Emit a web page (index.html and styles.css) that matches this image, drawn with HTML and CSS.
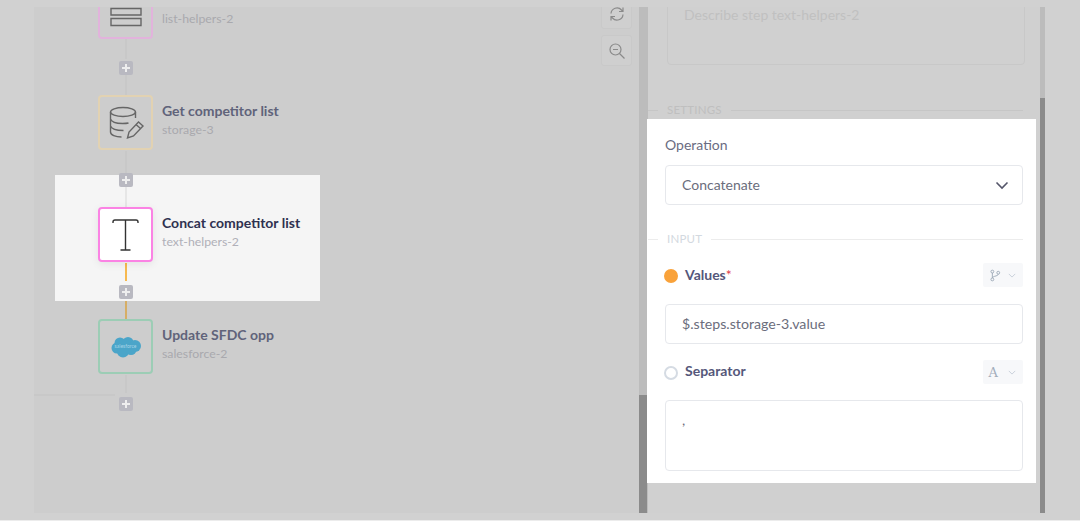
FILE: index.html
```html
<!DOCTYPE html>
<html lang="en">
<head>
<meta charset="utf-8">
<title>Workflow step</title>
<link rel="stylesheet" href="styles.css">
</head>
<body>
<div class="frame">
  <main class="canvas">
    <div class="branch"></div>
    <div class="line line-a"></div>
    <div class="line line-b"></div>
    <div class="line line-c"></div>
    <div class="line line-d"></div>
    <div class="line line-e"></div>
    <div class="spot"></div>
    <div class="line line-g"></div>
    <div class="line line-h"></div>

    <span class="plus plus-1"><svg viewBox="0 0 14 14"><path d="M7 3v8M3 7h8"/></svg></span>
    <span class="plus plus-2"><svg viewBox="0 0 14 14"><path d="M7 3v8M3 7h8"/></svg></span>
    <span class="plus plus-3"><svg viewBox="0 0 14 14"><path d="M7 3v8M3 7h8"/></svg></span>
    <span class="plus plus-4"><svg viewBox="0 0 14 14"><path d="M7 3v8M3 7h8"/></svg></span>

    <article class="node node-1">
      <div class="tile tile-pink-dim">
        <svg class="ico" viewBox="0 0 55 55"><path d="M13 24.500h30v6.500h-30zM13 34.500h30v7h-30z"/></svg>
      </div>
      <div class="meta"><p class="name"></p><p class="slug">list-helpers-2</p></div>
    </article>
    <article class="node node-2">
      <div class="tile tile-amber-dim">
        <svg class="ico" viewBox="0 0 55 55">
          <ellipse cx="25" cy="17" rx="12.500" ry="4.500"/>
          <path d="M12.500 17v20c0 3 5 5 11 5M37.500 17v6M12.500 24c1 3 6 4.500 12 4.500 2 0 4 0 6-.5M12.500 31c1 3 6 4.500 13 4.500"/>
          <path d="M29.500 43l1.500-6 9.500-10 4.500 4-9.500 10zM38 29.500l4.500 4"/>
        </svg>
      </div>
      <div class="meta"><p class="name">Get competitor list</p><p class="slug">storage-3</p></div>
    </article>
    <article class="node node-3">
      <div class="tile tile-pink">
        <svg class="ico ico-t" viewBox="0 0 55 55"><path d="M27.500 13v30M15 16v-1c0-1.200.8-2 2-2h21c1.200 0 2 .8 2 2v1M22.500 43h10"/></svg>
      </div>
      <div class="meta"><p class="name name-hot">Concat competitor list</p><p class="slug">text-helpers-2</p></div>
    </article>
    <article class="node node-4">
      <div class="tile tile-green-dim">
        <svg class="cloud" viewBox="0 0 30 22">
          <circle cx="9" cy="7" r="5.500"/><circle cx="17" cy="6.500" r="5.500"/><circle cx="24" cy="10" r="6"/>
          <circle cx="6" cy="12" r="5.500"/><circle cx="12" cy="15.500" r="6"/><circle cx="20" cy="13.500" r="5.500"/>
        </svg>
        <span class="cloud-word">salesforce</span>
      </div>
      <div class="meta"><p class="name">Update SFDC opp</p><p class="slug">salesforce-2</p></div>
    </article>
  </main>

  <aside class="tools">
    <button class="tool tool-top" type="button">
      <svg viewBox="0 0 18 18"><path d="M3 8.500a6 6 0 0 1 10.500-3.500L15 6.500M15 2.500v4h-4M15 9.500A6 6 0 0 1 4.500 13L3 11.500M3 15.500v-4h4"/></svg>
    </button>
    <button class="tool" type="button">
      <svg viewBox="0 0 18 18"><circle cx="7.500" cy="7.500" r="5.500"/><path d="M5 7.500h5M11.500 11.500l5 5"/></svg>
    </button>
  </aside>

  <div class="divider"><div class="divider-thumb"></div></div>

  <section class="panel">
    <div class="describe">Describe step text-helpers-2</div>
    <div class="rule rule-dim"><span>SETTINGS</span></div>
    <div class="form">
      <label class="label">Operation</label>
      <div class="field select"><span class="select-text">Concatenate</span>
        <svg class="chev" viewBox="0 0 14 9"><path d="M1.500 1.500L7 7l5.500-5.500"/></svg>
      </div>
      <div class="rule"><span>INPUT</span></div>
      <div class="param param-values">
        <span class="dot dot-on"></span>
        <span class="param-name">Values<em>*</em></span>
        <span class="mode">
          <svg class="mode-ico" viewBox="0 0 14 16"><circle cx="3" cy="3" r="1.800"/><circle cx="3" cy="13" r="1.800"/><circle cx="10.500" cy="4.500" r="1.800"/><path d="M3 4.800v6.400M10.500 6.300c0 2.500-5 2-7 4"/></svg>
          <svg class="mode-chev" viewBox="0 0 10 6"><path d="M1 1l4 4 4-4"/></svg>
        </span>
      </div>
      <div class="field value">$.steps.storage-3.value</div>
      <div class="param param-sep">
        <span class="dot"></span>
        <span class="param-name">Separator</span>
        <span class="mode mode-text">
          <span class="mode-a">A</span>
          <svg class="mode-chev" viewBox="0 0 10 6"><path d="M1 1l4 4 4-4"/></svg>
        </span>
      </div>
      <div class="field area">,</div>
    </div>
  </section>

  <div class="scrollbar"><div class="scrollbar-thumb"></div></div>
</div>
</body>
</html>
```
FILE: styles.css
```css
* { box-sizing: border-box; }
html, body { margin: 0; height: 521px; overflow: hidden; }
body {
  background: #d1d1d1;
  box-shadow: inset 0 -1px #ececec;
  font-family: Lato, "Noto Sans", sans-serif;
  padding: 7px 35px 0 34px;
}
p { margin: 0; }
.frame {
  position: relative;
  display: flex;
  width: 1011px;
  height: 506px;
  background: #cdcdcd;
  overflow: hidden;
}
.canvas { position: relative; flex: 0 0 605px; height: 100%; }
.tools { flex: 0 0 0; position: relative; }
.tool {
  position: absolute;
  left: -38px;
  width: 31px;
  height: 31px;
  padding: 0;
  display: flex;
  align-items: center;
  justify-content: center;
  background: #cfcfcf;
  border: 1px solid #c9c9c9;
  border-radius: 3px;
  top: 28px;
}
.tool-top { top: -9px; }
.tool svg { width: 18px; height: 18px; fill: none; stroke: #8a8a8a; stroke-width: 1.200; }
.divider { flex: 0 0 9px; background: #bcbcbc; position: relative; }
.divider-thumb { position: absolute; left: 0; right: 1px; top: 388px; bottom: 0; background: #8b8b8b; }

.line { position: absolute; left: 91px; width: 2px; background: #c8c8c8; }
.line-a { top: 32px; height: 20px; }
.line-b { top: 68px; height: 20px; }
.line-c { top: 144px; height: 22px; }
.line-d { top: 180px; height: 20px; background: #e6e6e6; z-index: 2; }
.line-e { top: 368px; height: 18px; }
.line-g { top: 256px; height: 18px; background: #f7b94f; z-index: 2; }
.line-h { top: 292px; height: 20px; background: #d6ae66; }
.branch { position: absolute; left: 0; top: 387px; width: 81px; height: 2px; background: #c8c8c8; }
.spot { position: absolute; left: 21px; top: 168px; width: 265px; height: 126px; background: #f5f5f5; z-index: 1; }

.plus {
  position: absolute;
  left: 85px;
  width: 14px;
  height: 14px;
  background: #b9b9c1;
  border-radius: 2px;
  z-index: 3;
  display: block;
}
.plus svg { display: block; width: 14px; height: 14px; fill: none; stroke: #eeeeee; stroke-width: 2; }
.plus-1 { top: 54px; }
.plus-2 { top: 166px; }
.plus-3 { top: 278px; }
.plus-4 { top: 390px; }

.node { position: absolute; left: 64px; display: flex; gap: 9px; z-index: 2; }
.node-1 { top: -23px; }
.node-2 { top: 88px; }
.node-3 { top: 200px; }
.node-4 { top: 312px; }
.tile {
  position: relative;
  flex: none;
  width: 55px;
  height: 55px;
  border: 2px solid;
  border-radius: 4px;
  display: flex;
  align-items: center;
  justify-content: center;
}
.tile-pink-dim { border-color: #e2b3dc; }
.tile-amber-dim { border-color: #e2d2b2; }
.tile-green-dim { border-color: #9ccdb5; }
.tile-pink { border-color: #fb83e4; background: #fff; box-shadow: 0 2px 8px rgba(0,0,0,.08); }
.ico { width: 55px; height: 55px; fill: none; stroke: #666; stroke-width: 1.400; flex: none; }
.ico-t { stroke: #333; }
.cloud { width: 30px; height: 22px; fill: #4ba5c9; flex: none; }
.cloud-word {
  position: absolute;
  left: 0;
  right: 0;
  top: 22px;
  text-align: center;
  font-size: 5px;
  line-height: 6px;
  color: #a9d4e6;
}
.meta { padding-top: 7px; }
.name { font-size: 14px; line-height: 18px; font-weight: 700; color: #60637a; white-space: nowrap; height: 18px; }
.name-hot { color: #2f3150; }
.slug { font-size: 12.300px; line-height: 18px; margin-top: 1px; color: #a9a9ae; white-space: nowrap; }
.node-3 .slug { color: #b0b0b8; }

.panel { flex: 0 0 392px; position: relative; background: #d0d0d0; }
.describe {
  margin: -15px 15px 0 19px;
  height: 73px;
  border: 1px solid #c8c8c8;
  border-radius: 4px;
  padding: 15px 16px 0;
  font-size: 14px;
  color: #c0c0c0;
  line-height: 14px;
}
.rule {
  display: flex;
  align-items: center;
  font-size: 11.500px;
  line-height: 14px;
  letter-spacing: .2px;
  color: #d3d9e0;
}
.rule::before { content: ""; width: 10px; height: 1px; background: #ececec; margin-right: 9px; }
.rule::after { content: ""; flex: 1; height: 1px; background: #ececec; margin-left: 9px; }
.rule-dim { color: #bfbfbf; margin: 38px 17px 0 0; }
.rule-dim::before, .rule-dim::after { background: #c6c6c6; }

.form {
  position: absolute;
  left: -1px;
  top: 112px;
  width: 389px;
  height: 364px;
  background: #fff;
  padding: 17px 13px 0 18px;
  z-index: 4;
}
.label { display: block; font-size: 14px; line-height: 18px; color: #6a6c82; }
.field {
  border: 1px solid #e6e8ec;
  border-radius: 4px;
  padding: 0 16px;
  font-size: 14.200px;
  color: #6b6d7c;
}
.select {
  display: flex;
  align-items: center;
  justify-content: space-between;
  height: 40px;
  margin-top: 11px;
  padding-right: 13px;
}
.select-text { font-size: 14px; margin-bottom: 2px; }
.chev { width: 14px; height: 9px; fill: none; stroke: #55566a; stroke-width: 1.600; }
.form .rule { margin: 27px 0 0 -17px; }
.param { display: flex; align-items: center; height: 24px; }
.param-values { margin-top: 17px; }
.param-sep { margin-top: 16px; }
.param-sep .param-name { padding-bottom: 4px; }
.dot {
  flex: none;
  width: 14px;
  height: 14px;
  border-radius: 50%;
  border: 2px solid #d5dbe3;
  margin: 2px 7px 0 -1px;
}
.dot-on { background: #f9a23a; border-color: #f9a23a; }
.param-name { font-size: 14px; font-weight: 700; color: #55577a; padding-bottom: 2px; }
.param-name em { color: #e0404a; font-style: normal; font-weight: 400; font-size: 14px; }
.mode {
  margin-left: auto;
  display: flex;
  align-items: center;
  gap: 7px;
  height: 24px;
  padding: 0 7px;
  background: #f7f8fa;
  border-radius: 2px;
}
.mode-text { gap: 10px; padding-left: 6px; }
.mode-ico { width: 11px; height: 15px; fill: none; stroke: #97a3b3; stroke-width: 1.100; }
.mode-chev { width: 8px; height: 5px; fill: none; stroke: #c9d0d9; stroke-width: 1.200; }
.mode-a { font-family: "DejaVu Serif", serif; font-size: 13px; color: #a2adbb; line-height: 1; }
.value { height: 40px; line-height: 38px; margin-top: 17px; }
.area { height: 71px; margin-top: 16px; padding-top: 10px; line-height: 18px; }

.scrollbar { flex: 0 0 5px; background: #bcbcbc; position: relative; }
.scrollbar-thumb { position: absolute; left: 0; right: 0; top: 91px; bottom: 0; background: #8b8b8b; }
```
